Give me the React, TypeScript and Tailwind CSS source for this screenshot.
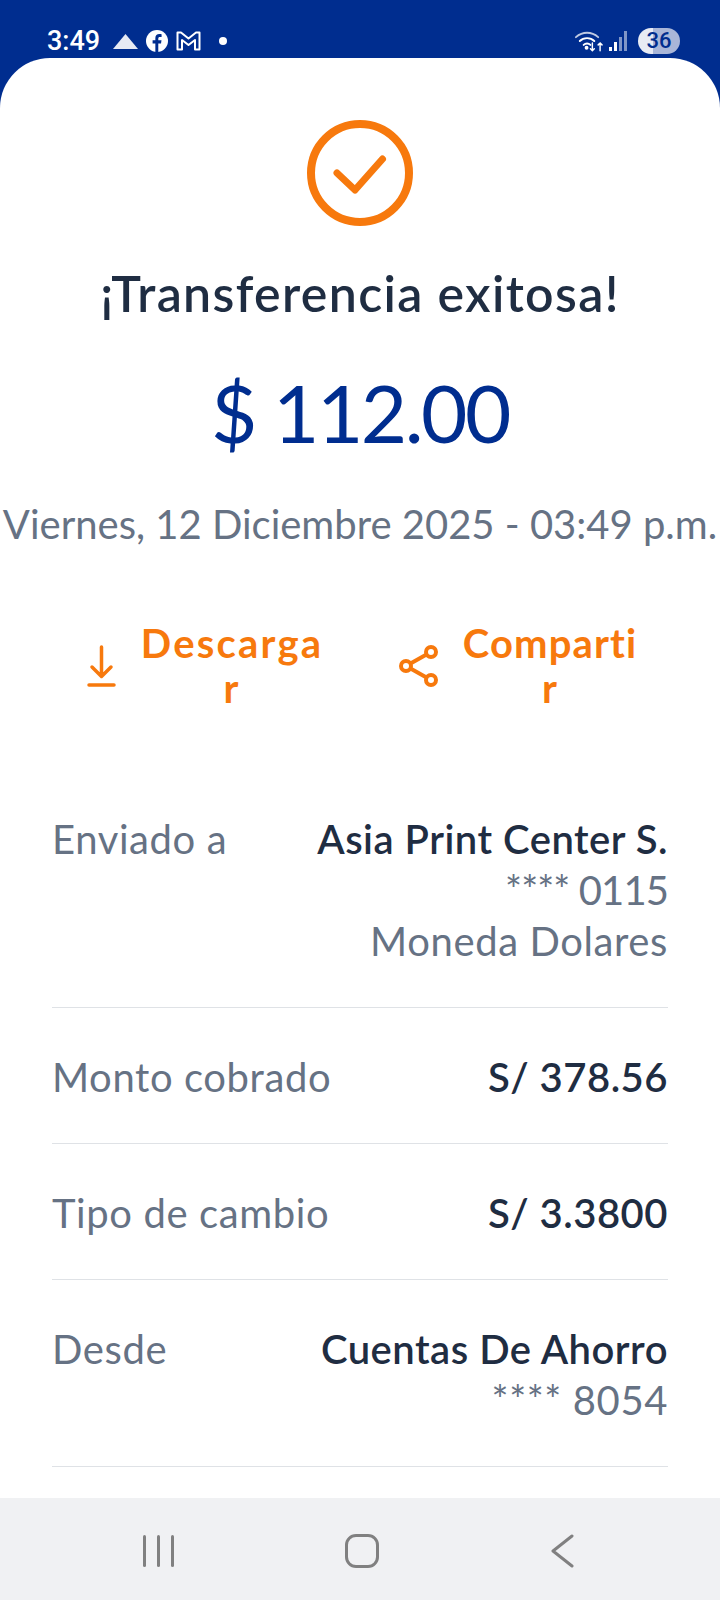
import type { ReactNode } from "react"

function Row({ label, value, lines = [] }: { label: string; value: string; lines?: ReactNode[] }) {
  return (
    <div className="flex justify-between border-b border-[#dfe2e6] pt-[44px] pb-[40px] text-[40px] leading-[51px] tracking-[0.6px] text-[#667284]">
      <span>{label}</span>
      <div className="text-right">
        <div className="font-semibold tracking-[0.5px] text-[#1f2d42]">{value}</div>
        {lines.map((l, i) => (
          <div key={i}>{l}</div>
        ))}
      </div>
    </div>
  )
}

function ActionButton({ label, icon, textClass }: { label: string; icon: ReactNode; textClass: string }) {
  return (
    <div className="flex items-center">
      {icon}
      <span className={`${textClass} break-all text-center text-[40px] leading-[45px] font-bold text-[#f7790d]`}>{label}</span>
    </div>
  )
}

export default function App() {
  return (
    <div className="flex h-[1600px] w-[720px] flex-col overflow-hidden bg-[#002d8f] font-['Lato',sans-serif]">
      {/* status bar */}
      <div className="flex h-[58px] shrink-0 items-center justify-between pt-[24px] pr-[40px] pl-[47px] font-['Roboto',sans-serif] text-white">
        <div className="flex items-center">
          <span className="w-[54px] text-[27px] leading-[34px] font-medium">3:49</span>
          <svg className="ml-[12px]" width="25" height="15" viewBox="0 0 25 15">
            <path d="M12.500 0 25 15H0Z" fill="#fff" opacity="0.9" />
          </svg>
          <svg className="ml-[8px]" width="22" height="22" viewBox="0 0 24 24">
            <circle cx="12" cy="12" r="12" fill="#fff" />
            <path d="M13.400 24v-9.400h3l.5-3.500h-3.500V9.200c0-1 .4-1.700 1.800-1.700h1.800V4.600c-.6-.1-1.500-.2-2.500-.2-2.600 0-4.300 1.500-4.300 4.300v2.400H7.200v3.500h3V24z" fill="#002d8f" />
          </svg>
          <svg className="ml-[8px]" width="25" height="20" viewBox="0 0 25 20" fill="none" stroke="#fff" strokeWidth="2" strokeLinejoin="round">
            <path d="M1.500 1.500h3.500l7.500 6 7.500-6h3.500v17h-4.500V9l-6.500 5-6.500-5v9.500H1.500z" />
          </svg>
          <div className="ml-[18px] h-[8px] w-[8px] rounded-full bg-white" />
        </div>
        <div className="flex items-center">
          <svg width="29" height="24" viewBox="0 0 30 24" fill="none" stroke="#fff" strokeWidth="2" strokeLinecap="round">
            <path d="M2 8c7-6 16-6 23 0" opacity="0.75" />
            <path d="M6 12c4-4 11-4 15 0" />
            <path d="M10 16c2-2 5-2 7 0" />
            <circle cx="13" cy="19" r="1" fill="#fff" />
            <path d="M19 14v8M17 20l2 2 2-2M27 22v-8M25 16l2-2 2 2" strokeWidth="1.500" />
          </svg>
          <svg className="ml-[5px]" width="20" height="22" viewBox="0 0 20 22">
            <rect x="1" y="17" width="3" height="4" fill="#fff" />
            <rect x="6" y="12" width="3" height="9" fill="#fff" />
            <rect x="11" y="7" width="3" height="14" fill="#fff" opacity="0.5" />
            <rect x="16" y="1" width="3" height="20" fill="#fff" opacity="0.5" />
          </svg>
          <div className="ml-[10px] h-[26px] w-[42px] rounded-full bg-[linear-gradient(90deg,#e8ebf4_0%,#e8ebf4_36%,#a9b6d8_36%)] text-center text-[22px] leading-[26px] font-medium text-[#002d8f]">
            36
          </div>
        </div>
      </div>

      {/* card */}
      <div className="flex min-h-0 flex-1 flex-col items-center rounded-t-[50px] bg-white pt-[62px]">
        <svg className="shrink-0" width="106" height="106" viewBox="0 0 106 106" fill="none" stroke="#f7790d" strokeLinecap="round" strokeLinejoin="round">
          <circle cx="53" cy="53" r="49" strokeWidth="8" />
          <path d="M30 53 L48 70 L75.500 39" strokeWidth="7" />
        </svg>
        <h1 className="mt-[37px] text-[50px] leading-[60px] font-semibold tracking-[1.35px] text-[#1f2d42]">¡Transferencia exitosa!</h1>
        <div className="mt-[39px] text-[80px] leading-[100px] tracking-[-2.5px] text-[#002d8f]">$ 112.00</div>
        <div className="mt-[37px] text-[40px] leading-[50px] whitespace-nowrap text-[#667284]">Viernes, 12 Diciembre 2025 - 03:49 p.m.</div>

        <div className="mt-[72px] flex w-full items-center gap-[74px] pl-[87px]">
          <ActionButton
            label="Descargar"
            textClass="ml-[23px] w-[186px] tracking-[2.2px]"
            icon={
              <svg className="shrink-0" width="29" height="42" viewBox="0 0 29 42" fill="none" stroke="#f7790d" strokeWidth="3.500" strokeLinecap="round" strokeLinejoin="round">
                <path d="M14.500 2v29M5 22l9.500 9.500L24 22" />
                <path d="M2 40h25" />
              </svg>
            }
          />
          <ActionButton
            label="Compartir"
            textClass="ml-[20px] w-[182px] tracking-[1.1px]"
            icon={
              <svg className="shrink-0" width="40" height="44" viewBox="0 0 40 44" fill="none" stroke="#f7790d" strokeWidth="4">
                <circle cx="32" cy="8" r="5" />
                <circle cx="7" cy="22" r="5" />
                <circle cx="32" cy="36" r="5" />
                <path d="M11.500 19.500 27.500 10.500M11.500 24.500l16 9" />
              </svg>
            }
          />
        </div>

        <div className="mt-[59px] w-full px-[52px]">
          <Row
            label="Enviado a"
            value="Asia Print Center S."
            lines={[<span className="tracking-[-0.9px]">**** 0115</span>, "Moneda Dolares"]}
          />
          <Row label="Monto cobrado" value="S/ 378.56" />
          <Row label="Tipo de cambio" value="S/ 3.3800" />
          <Row label="Desde" value="Cuentas De Ahorro" lines={["**** 8054"]} />
        </div>
      </div>

      {/* nav bar */}
      <div className="flex h-[102px] shrink-0 items-center justify-between bg-[#f0f1f3] pt-[4px] pr-[146px] pl-[143px]">
        <div className="flex gap-[11px]">
          <div className="h-[32px] w-[3px] rounded bg-[#808080]" />
          <div className="h-[32px] w-[3px] rounded bg-[#808080]" />
          <div className="h-[32px] w-[3px] rounded bg-[#808080]" />
        </div>
        <div className="h-[34px] w-[34px] rounded-[11px] border-[3px] border-[#808080]" />
        <svg width="24" height="34" viewBox="0 0 24 34" fill="none" stroke="#808080" strokeWidth="3" strokeLinecap="round" strokeLinejoin="round">
          <path d="M22 2 3 17l19 15" />
        </svg>
      </div>
    </div>
  )
}
